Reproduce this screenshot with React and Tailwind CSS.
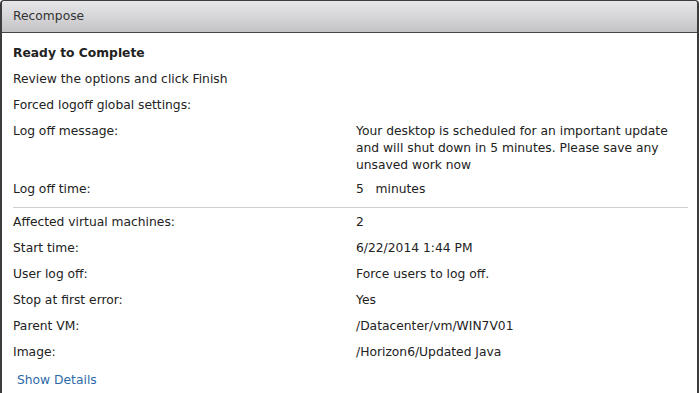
import React from 'react';

const rowsTop = [
  ['Affected virtual machines:', '2'],
  ['Start time:', '6/22/2014 1:44 PM'],
  ['User log off:', 'Force users to log off.'],
  ['Stop at first error:', 'Yes'],
  ['Parent VM:', '/Datacenter/vm/WIN7V01'],
  ['Image:', '/Horizon6/Updated Java'],
];

function Row({ label, children }) {
  return (
    <div className="flex py-[5px] leading-[16px]">
      <div className="w-[343px] shrink-0">{label}</div>
      <div className="flex-1">{children}</div>
    </div>
  );
}

export default function App() {
  return (
    <div
      className="w-[700px] h-[393px] bg-white overflow-hidden text-[12.3px] text-[#222]"
      style={{ fontFamily: '"DejaVu Sans", Verdana, sans-serif' }}
    >
      <div className="h-full border-l-2 border-r-2 border-t border-[#3c3c3c] rounded-tl-[4px] rounded-tr-[4px] flex flex-col mr-[1px]">
        {/* header */}
        <div className="h-[32px] shrink-0 bg-gradient-to-b from-[#e6e6e8] via-[#d6d6d9] to-[#c3c3c6] border-b border-[#444] rounded-t-[3px] flex items-center px-[11px] text-[#333]">
          Recompose
        </div>

        <div className="px-[11px] pt-[7px]">
          <div className="font-bold py-[5px] leading-[16px]">Ready to Complete</div>
          <div className="py-[5px] leading-[16px]">Review the options and click Finish</div>
          <div className="py-[5px] leading-[16px]">Forced logoff global settings:</div>
          <Row label="Log off message:">
            <span className="block w-[322px] leading-[17px] -mb-[3px]">
              Your desktop is scheduled for an important update and will shut down in 5 minutes. Please save any unsaved work now
            </span>
          </Row>
          <Row label="Log off time:">
            5&nbsp;&nbsp;&nbsp;minutes
          </Row>

          <div className="border-t border-[#cfcfcf] mt-[5px] mb-[1px] mr-[-2px]" />

          {rowsTop.map(([l, v]) => (
            <Row key={l} label={l}>{v}</Row>
          ))}

          <div className="pl-[4px] pt-[7px] text-[#2f6aa8] leading-[16px]">Show Details</div>
        </div>
      </div>
    </div>
  );
}
